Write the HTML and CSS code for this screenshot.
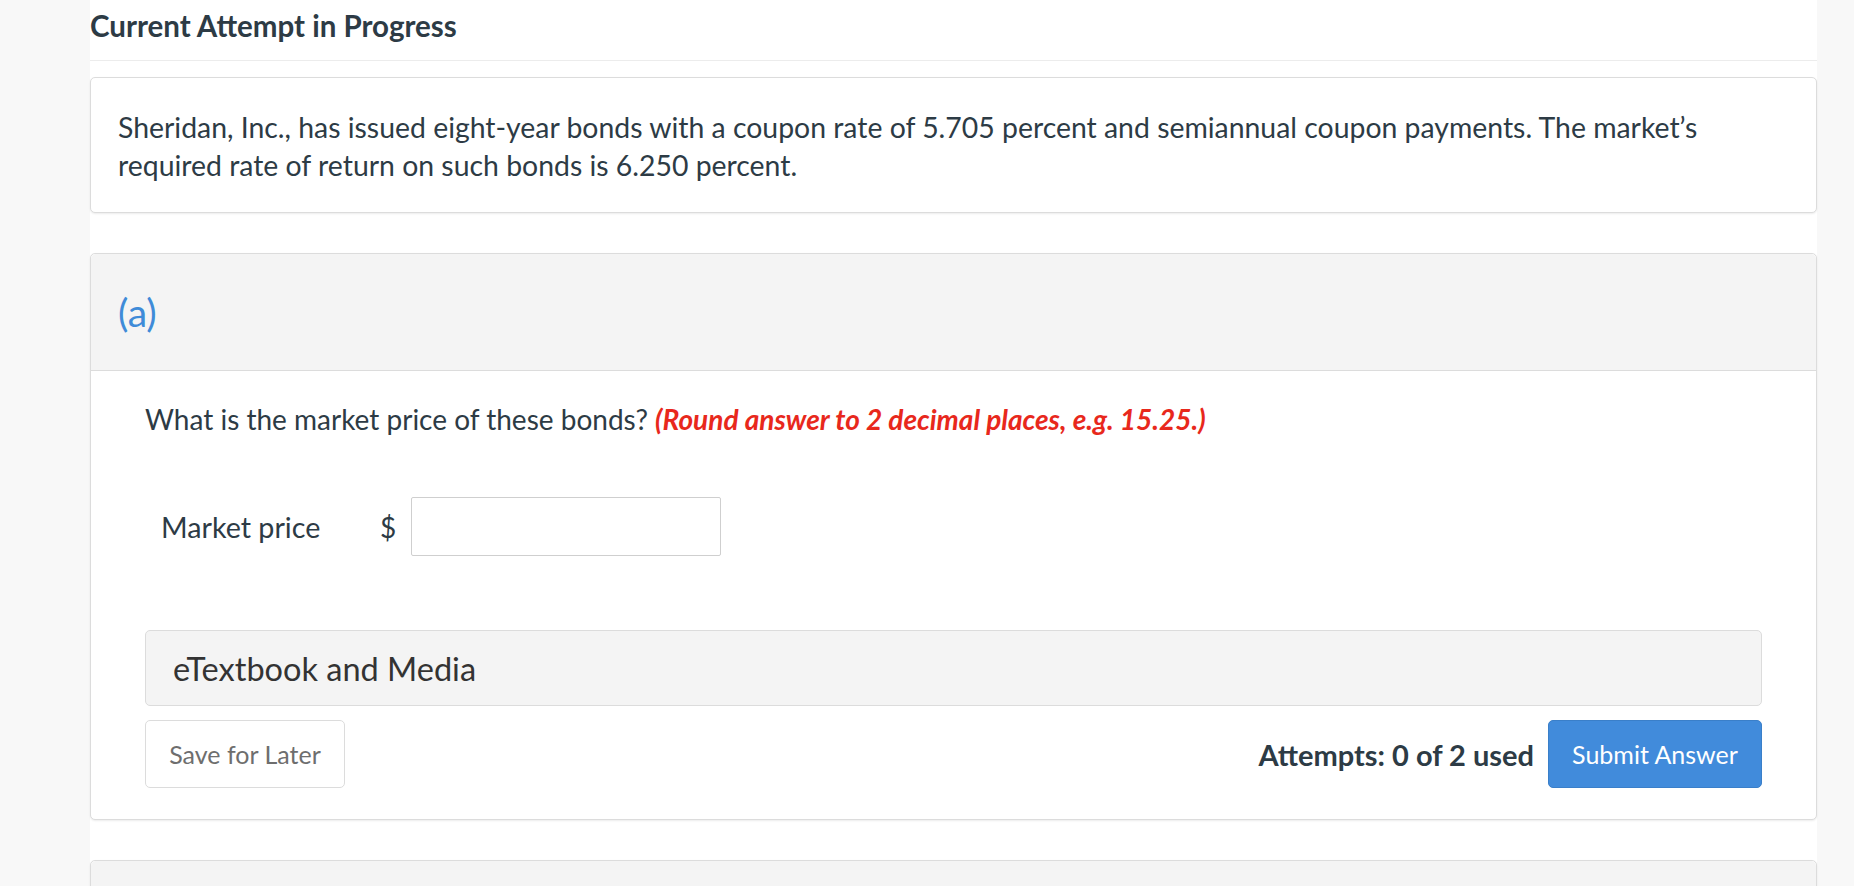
FILE: index.html
```html
<!DOCTYPE html>
<html>
<head>
<meta charset="utf-8">
<link rel="stylesheet" href="styles.css">
</head>
<body>
<div class="page">
  <main class="content">
    <h1 class="title">Current Attempt in Progress</h1>
    <section class="card intro">
      <p>Sheridan, Inc., has issued eight-year bonds with a coupon rate of 5.705 percent and semiannual coupon payments. The market’s required rate of return on such bonds is 6.250 percent.</p>
    </section>
    <section class="card part">
      <header class="part-head">(a)</header>
      <div class="part-body">
        <p class="question">What is the market price of these bonds? <em class="hint">(Round answer to 2 decimal places, e.g. 15.25.)</em></p>
        <div class="answer-row">
          <span class="answer-label">Market price</span>
          <span class="currency">$</span>
          <input class="answer-input" type="text">
        </div>
        <div class="media">eTextbook and Media</div>
        <div class="actions">
          <button class="btn btn-save">Save for Later</button>
          <div class="actions-right">
            <span class="attempts">Attempts: 0 of 2 used</span>
            <button class="btn btn-submit">Submit Answer</button>
          </div>
        </div>
      </div>
    </section>
    <section class="card part next">
      <header class="part-head"></header>
    </section>
  </main>
</div>
</body>
</html>
```
FILE: styles.css
```css
html, body {
  margin: 0;
  padding: 0;
  height: 100%;
  overflow: hidden;
}
body {
  background: #f8f8f8;
  font-family: Lato, "Open Sans", sans-serif;
  color: #2d3b45;
}
.page {
  display: flex;
  padding: 0 37px 0 90px;
}
.content {
  flex: 1;
  background: #fff;
  min-height: 886px;
}
.title {
  margin: 0;
  font-size: 29.5px;
  font-weight: 700;
  line-height: 34px;
  padding-top: 9px;
  padding-bottom: 17px;
  border-bottom: 1px solid #ececec;
  margin-bottom: 16px;
}
.card {
  border: 1px solid #dcdcdc;
  border-radius: 5px;
  box-shadow: 0 1px 2px rgba(0,0,0,0.08);
  background: #fff;
}
.intro {
  padding: 30px 27px 28px 27px;
  margin-bottom: 40px;
}
.intro p {
  margin: 0;
  font-size: 28.4px;
  line-height: 38px;
}
.part {
  margin-bottom: 40px;
}
.part-head {
  background: #f4f4f4;
  border-bottom: 1px solid #dcdcdc;
  border-radius: 5px 5px 0 0;
  height: 116px;
  display: flex;
  align-items: center;
  padding-left: 27px;
  font-size: 39px;
  color: #3f8bd8;
}
.part-body {
  padding: 30px 54px 31px 54px;
}
.question {
  margin: 0;
  font-size: 28px;
  line-height: 36px;
}
.hint {
  color: #e8281c;
  font-weight: 700;
  font-style: italic;
}
.answer-row {
  display: flex;
  align-items: center;
  margin-top: 60px;
  padding-left: 16px;
}
.answer-label {
  font-size: 28.7px;
  width: 219px;
}
.currency {
  font-size: 28px;
  width: 31px;
}
.answer-input {
  width: 310px;
  height: 59px;
  box-sizing: border-box;
  border: 1px solid #cfcfcf;
  border-radius: 2px;
  padding: 0;
  margin: 0;
}
.media {
  margin-top: 74px;
  background: #f4f4f4;
  border: 1px solid #dcdcdc;
  border-radius: 5px;
  height: 74px;
  display: flex;
  align-items: center;
  padding-left: 27px;
  font-size: 32.5px;
  color: #333;
}
.actions {
  margin-top: 14px;
  display: flex;
  justify-content: space-between;
  align-items: center;
}
.actions-right {
  display: flex;
  align-items: center;
  gap: 14px;
}
.btn {
  font-family: Lato, "Open Sans", sans-serif;
  font-size: 25px;
  height: 68px;
  border-radius: 5px;
  padding: 0 23px;
  cursor: pointer;
}
.btn-save {
  background: #fff;
  border: 1px solid #dcdcdc;
  color: #6e6e6e;
  width: 200px;
}
.btn-submit {
  background: #418bdb;
  border: 1px solid #3a7fc9;
  color: #fff;
  width: 214px;
}
.attempts {
  font-size: 29px;
  font-weight: 700;
}
.next .part-head {
  height: 60px;
}
```
